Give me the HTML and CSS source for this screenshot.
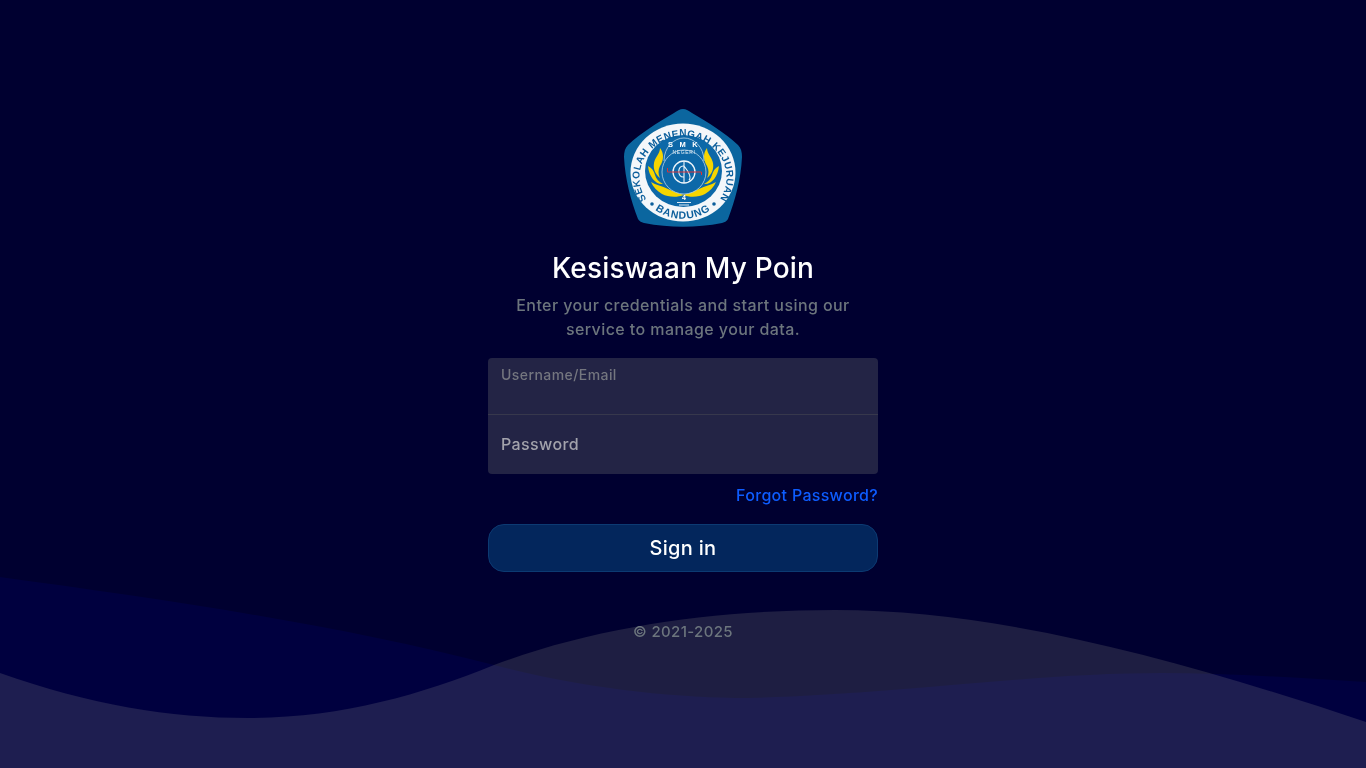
FILE: index.html
```html
<!DOCTYPE html>
<html lang="en">
<head>
<meta charset="utf-8">
<title>Kesiswaan My Poin</title>
<link rel="stylesheet" href="styles.css">
</head>
<body>
<svg class="waves" viewBox="0 0 1366 768" aria-hidden="true">
  <rect class="wave-bg" width="1366" height="768"/>
  <path class="wave-a" d="M0,577 C170,600 340,625 494,665 C590,690 680,698 748,698 C900,694 1030,673 1162,673 C1230,673 1300,678 1366,682 V768 H0 Z"/>
  <path class="wave-b" d="M0,673 C90,705 170,718 248,718 C340,718 420,695 494,665 C600,625 720,610 835,610 C1000,610 1180,660 1366,722 V768 H0 Z"/>
</svg>
<main class="signin">
  <svg class="logo" viewBox="0 0 118 118" role="img" aria-label="SMK Negeri 4 Bandung">
    <defs>
      <path id="arcTop" d="M21,88 A43.5,40.5 0 1 1 97,88"/>
      <path id="arcBottom" d="M30,100 A48,48 0 0 0 88,100"/>
      <g id="flame">
        <path d="M36,39 C40,44 40,51 36,57 C34,61 34,65 36,69 C31,65 29,60 30,54 C31,48 36,45 36,39Z"/>
        <path d="M24,57 C28,59 30,62 31,66 C32,70 35,73 39,75 C32,76 25,68 24,57Z"/>
        <path d="M27,73 C32,76 38,77 44,80 C48,82 54,84 60,86 C52,89 44,88 38,85 C33,82 29,78 27,73Z"/>
      </g>
    </defs>
    <path class="logo-shield" d="M59,0 C62,0 65,2 68,4 C85,14 101,24 114,36 C117,39 118,43 118,48 C117,70 111,92 104,110 C103,112 101,113 98,114 C72,119 46,119 20,114 C17,113 15,112 14,110 C7,92 1,70 0,48 C0,43 1,39 4,36 C17,24 33,14 50,4 C53,2 56,0 59,0Z"/>
    <ellipse class="logo-ring" cx="59" cy="63.5" rx="52.5" ry="49"/>
    <ellipse class="logo-inner" cx="59.5" cy="62" rx="38.5" ry="36"/>
    <text class="logo-text"><textPath href="#arcTop" startOffset="50%">SEKOLAH MENENGAH KEJURUAN</textPath></text>
    <text class="logo-text logo-text-b"><textPath href="#arcBottom" startOffset="50%">BANDUNG</textPath></text>
    <circle class="logo-dot" cx="28" cy="95" r="1.8"/>
    <circle class="logo-dot" cx="90" cy="95" r="1.8"/>
    <use href="#flame" class="logo-flame"/>
    <use href="#flame" class="logo-flame" transform="matrix(-1 0 0 1 119 0)"/>
    <path class="logo-banner" d="M40,52 C40,38 50,29 60,29 C70,29 80,38 80,52"/>
    <circle class="logo-band" cx="60" cy="63" r="22"/>
    <text class="logo-smk" x="60" y="38">S M K</text>
    <text class="logo-neg" x="60" y="44.5">NEGERI</text>
    <circle class="logo-hub" cx="60" cy="63" r="11"/>
    <path class="logo-glyph" d="M60,52 V74 M60,57 C53,56 53,69 60,68 M60,57 C64,62 68,68 65,71"/>
    <path class="logo-red" d="M43.5,59 V63 H77.5 V66"/>
    <text class="logo-four" x="60" y="91">4</text>
    <path class="logo-base" d="M53,93.5 H67 M55,96 H65"/>
  </svg>
  <h1 class="title">Kesiswaan My Poin</h1>
  <p class="lead">Enter your credentials and start using our<br>service to manage your data.</p>
  <form class="form">
    <div class="fields">
      <div class="field field-filled"><span class="field-label-sm">Username/Email</span></div>
      <div class="field"><span class="field-label">Password</span></div>
    </div>
    <a class="forgot" href="#">Forgot Password?</a>
    <button class="submit" type="button">Sign in</button>
  </form>
  <p class="copy">© 2021-2025</p>
</main>
</body>
</html>
```

FILE: styles.css
```css
* { box-sizing: border-box; }
html, body { height: 100%; }
body {
  margin: 0;
  background: #000030;
  font-family: Inter, "Noto Sans", sans-serif;
  overflow: hidden;
}
.waves {
  position: absolute;
  left: 0;
  top: 0;
  width: 1366px;
  height: 768px;
}
.wave-bg { fill: #000030; }
.wave-a { fill: #00003f; }
.wave-b { fill: #1e1e16; mix-blend-mode: screen; }
.signin {
  position: relative;
  width: 390px;
  margin: 0 auto;
  padding-top: 109px;
  display: flex;
  flex-direction: column;
  align-items: center;
}
.logo { width: 118px; height: 118px; display: block; }
.logo-shield { fill: #0b669f; }
.logo-ring { fill: #f4f7fa; }
.logo-inner { fill: #0d68a8; }
.logo-text {
  font-family: "Liberation Sans", sans-serif;
  font-size: 10px;
  font-weight: 700;
  fill: #0d5f9c;
  text-anchor: middle;
  letter-spacing: 0.4px;
}
.logo-text-b { font-size: 10.5px; letter-spacing: 0.8px; }
.logo-dot { fill: #0d5f9c; }
.logo-flame { fill: #f6d500; }
.logo-banner { fill: #0d68a8; stroke: #b9d6ea; stroke-width: 0.8; }
.logo-band { fill: #0d68a8; stroke: #b9d6ea; stroke-width: 0.8; }
.logo-smk {
  font-family: "Liberation Sans", sans-serif;
  font-size: 7.5px;
  font-weight: 700;
  fill: #fff;
  text-anchor: middle;
  letter-spacing: 2.2px;
}
.logo-neg {
  font-family: "Liberation Sans", sans-serif;
  font-size: 5px;
  fill: #e4eef6;
  text-anchor: middle;
  letter-spacing: 0.6px;
}
.logo-hub { fill: #0d68a8; stroke: #eef5fa; stroke-width: 1.3; }
.logo-glyph { fill: none; stroke: #eef5fa; stroke-width: 1.1; }
.logo-red { fill: none; stroke: #d8333a; stroke-width: 1; }
.logo-four {
  font-family: "Liberation Sans", sans-serif;
  font-size: 7px;
  font-weight: 700;
  fill: #fff;
  text-anchor: middle;
}
.logo-base { fill: none; stroke: #dfeaf3; stroke-width: 1; }
.title {
  margin: 20px 0 0;
  height: 42px;
  line-height: 42px;
  font-size: 28px;
  font-weight: 450;
  letter-spacing: 0.18px;
  color: #fff;
  white-space: nowrap;
}
.lead {
  margin: 4px 0 0;
  font-size: 16px;
  line-height: 24px;
  font-weight: 500;
  letter-spacing: 0.42px;
  color: #6c757d;
  text-align: center;
  white-space: nowrap;
}
.form {
  width: 100%;
  margin-top: 17px;
  display: flex;
  flex-direction: column;
}
.fields {
  height: 116px;
  background: #232445;
  border-radius: 4px;
  display: flex;
  flex-direction: column;
}
.field {
  height: 59px;
  padding: 0 13px 2px;
  display: flex;
  align-items: center;
}
.field-filled {
  height: 57px;
  border-bottom: 1px solid #37384c;
  align-items: flex-start;
  padding-top: 8px;
}
.field-label-sm { font-size: 14px; line-height: 17px; font-weight: 500; letter-spacing: 0.43px; color: #74767f; }
.field-label { font-size: 16px; line-height: 24px; font-weight: 500; letter-spacing: 0.38px; color: #a3a3ac; }
.forgot {
  align-self: flex-end;
  margin-top: 9px;
  font-size: 16px;
  line-height: 24px;
  font-weight: 500;
  letter-spacing: 0.3px;
  color: #0d5cff;
  text-decoration: none;
}
.submit {
  margin-top: 17px;
  height: 48px;
  border: 1px solid #0c3a72;
  border-radius: 16px;
  background: #03265c;
  color: #fff;
  font-family: inherit;
  font-size: 20px;
  font-weight: 450;
  letter-spacing: 0.3px;
}
.copy {
  margin: 48px 0 0;
  font-size: 15px;
  line-height: 24px;
  font-weight: 500;
  letter-spacing: 0.35px;
  color: #6c757d;
}
```
